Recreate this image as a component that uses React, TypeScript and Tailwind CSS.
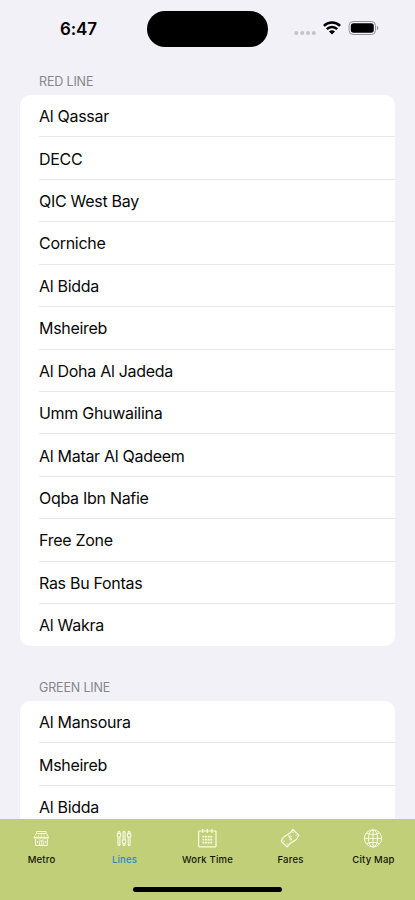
import React, { useState } from 'react';

interface Line {
  title: string;
  stations: string[];
}

const lines: Line[] = [
  {
    title: 'Red Line',
    stations: [
      'Al Qassar',
      'DECC',
      'QIC West Bay',
      'Corniche',
      'Al Bidda',
      'Msheireb',
      'Al Doha Al Jadeda',
      'Umm Ghuwailina',
      'Al Matar Al Qadeem',
      'Oqba Ibn Nafie',
      'Free Zone',
      'Ras Bu Fontas',
      'Al Wakra',
    ],
  },
  {
    title: 'Green Line',
    stations: ['Al Mansoura', 'Msheireb', 'Al Bidda'],
  },
];

const StoreIcon = () => (
  <svg width="20" height="20" viewBox="0 0 20 20" fill="none" stroke="currentColor" strokeWidth="1" strokeLinejoin="round">
    <path d="M5.5 5.5v-2h9.6v2M5 5.5h10.6l1.9 4H3.1z" />
    <path d="M7.8 5.5l-.6 4M10.3 5.5v4M12.8 5.5l.6 4" strokeWidth="0.6" />
    <path d="M3.1 9.5c.3 2 3.3 2 3.6 0 .3 2 3.3 2 3.6 0 .3 2 3.3 2 3.6 0 .3 2 3.3 2 3.6 0" strokeWidth="0.8" />
    <path d="M4.5 11.4v6h11.8v-6" />
    <path d="M8.5 17.4v-4.6h3.8v4.6M10.4 12.8v4.6" strokeWidth="0.8" />
    <path d="M6.5 12.9v2.2M14.3 12.9v2.2" />
  </svg>
);

const SlidersIcon = () => (
  <svg width="20" height="20" viewBox="0 0 20 20" fill="none" stroke="currentColor" strokeWidth="1.1">
    <rect x="4" y="3.2" width="1.9" height="14.2" rx="0.95" />
    <rect x="9.1" y="3.2" width="1.9" height="14.2" rx="0.95" />
    <rect x="14.2" y="3.2" width="1.9" height="14.2" rx="0.95" />
    <g className="fill-[#c1cf78]">
      <circle cx="4.95" cy="7.3" r="1.9" />
      <circle cx="10.05" cy="13.6" r="1.9" />
      <circle cx="15.15" cy="7.3" r="1.9" />
    </g>
  </svg>
);

const CalendarIcon = () => (
  <svg width="20" height="20" viewBox="0 0 20 20" fill="none" stroke="currentColor" strokeWidth="1.2">
    <rect x="1.6" y="3" width="17.4" height="15.8" rx="0.8" />
    <path d="M5.7 1v4M10.3 1v4M14.9 1v4" />
    <path d="M5.4 8.7h9.8M5.4 11.7h9.8M5.4 14.7h9.8" strokeWidth="1.8" strokeDasharray="1.9 0.73" />
  </svg>
);

const CashIcon = () => (
  <svg width="20" height="20" viewBox="0 0 20 20" fill="none" stroke="currentColor" strokeWidth="1.2" strokeLinecap="round" strokeLinejoin="round">
    <path d="M1.2 13.3C2.4 9.8 4 8.2 6.4 7.2C9.2 6 11.4 4.6 12.9 1.5L18.8 7.1C17.6 10.7 15.8 12.3 13.4 13.4C10.6 14.6 8.7 15.9 7.1 19z" />
    <path d="M11.4 8.4c-.8-.9-2.7-.5-2.5.6.3 1.1 2.4.6 2.7 1.7.3 1.1-1.6 1.8-2.6.8M8.6 7.7l3.4 4.4" strokeWidth="0.9" />
    <path d="M12.9 4.2l.1.1M16.1 7.3l.1.1M3.9 12.9l.1.1M7.1 16l.1.1" />
  </svg>
);

const GlobeIcon = () => (
  <svg width="20" height="20" viewBox="0 0 20 20" fill="none" stroke="currentColor" strokeWidth="1">
    <circle cx="10" cy="10.4" r="8.6" />
    <ellipse cx="10" cy="10.4" rx="4.6" ry="8.6" />
    <path d="M10 1.8V19M1.4 10.4h17.2M3.5 5.2c3.8 1.7 9.2 1.7 13 0M3.5 15.6c3.8-1.7 9.2-1.7 13 0" />
  </svg>
);

const tabs = [
  { label: 'Metro', Icon: StoreIcon },
  { label: 'Lines', Icon: SlidersIcon },
  { label: 'Work Time', Icon: CalendarIcon },
  { label: 'Fares', Icon: CashIcon },
  { label: 'City Map', Icon: GlobeIcon },
];

const StatusBar = () => (
  <header className="flex-none h-[57px] flex items-start">
    <div className="w-[147px] pt-[17px] pl-[10px] text-center text-[17px] leading-6 tracking-[-0.15px] font-semibold text-black">6:47</div>
    <div className="mt-[11px] w-[121px] h-9 rounded-full bg-black" />
    <div className="flex items-center mt-5 ml-[26px] h-4">
      <svg width="22" height="16" viewBox="0 0 22 16" className="fill-[#c3c3c8]">
        <circle cx="2.3" cy="12.9" r="2" />
        <circle cx="8.2" cy="12.9" r="2" />
        <circle cx="14" cy="12.9" r="2" />
        <circle cx="19.8" cy="12.9" r="2" />
      </svg>
      <svg width="20" height="16" viewBox="0 0 20 16" className="ml-[7px]" fill="none" stroke="black" strokeWidth="2.5">
        <path d="M.9 5.9c4.6-4.4 11.6-4.4 16.2 0M3.8 9.1c2.9-2.9 7.5-2.9 10.4 0" />
        <path d="M6 11.4c1.7-1.5 4.3-1.5 6 0l-3 3.1z" fill="black" stroke="none" />
      </svg>
      <svg width="32" height="16" viewBox="0 0 32 16" className="ml-[5px]">
        <rect x="1.1" y="1.5" width="26.4" height="13" rx="4" fill="none" stroke="#929297" />
        <rect x="2.8" y="3.2" width="23" height="9.6" rx="2.7" fill="black" />
        <path d="M28.9 5.8c1.9.7 1.9 3.7 0 4.4z" fill="#929297" />
      </svg>
    </div>
  </header>
);

const LineSection: React.FC<{ line: Line }> = ({ line }) => (
  <section className="px-5">
    <h2 className="h-[38px] pt-4 pl-[19px] text-[12.5px] leading-[18px] tracking-[-0.15px] uppercase text-[#86868b]">
      {line.title}
    </h2>
    <ul className="rounded-[10px] bg-white overflow-hidden">
      {line.stations.map((station) => (
        <li key={station} className="group h-[42.43px] pl-[19px]">
          <div className="h-full flex items-center pt-px border-b border-[#e7e7e9] group-last:border-transparent text-base tracking-[-0.29px] text-[#080808]">
            {station}
          </div>
        </li>
      ))}
    </ul>
  </section>
);

const App: React.FC = () => {
  const [activeTab, setActiveTab] = useState('Lines');

  return (
    <div className="flex flex-col w-[415px] h-[900px] overflow-hidden bg-[#f2f1f8] font-['Inter','Liberation_Sans',sans-serif]">
      <StatusBar />

      <main className="flex-1 min-h-0 overflow-hidden flex flex-col gap-[16.5px]">
        {lines.map((line) => (
          <LineSection key={line.title} line={line} />
        ))}
      </main>

      {/* Tab bar */}
      <nav className="flex-none h-[81px] flex flex-col items-center bg-[#c1cf78]">
        <div className="grid grid-cols-5 w-full h-[68px]">
          {tabs.map(({ label, Icon }) => (
            <button key={label} onClick={() => setActiveTab(label)} className="flex flex-col items-center pt-[9px] text-[#f9fbe8]">
              <span className="mr-px">
                <Icon />
              </span>
              <span
                className={`mt-[6px] text-[9.5px] leading-3 font-medium tracking-[0.2px] ${
                  activeTab === label ? 'text-[#2b87c8]' : 'text-[#14160c]'
                }`}
              >
                {label}
              </span>
            </button>
          ))}
        </div>
        <div className="w-[149px] h-[5px] rounded-full bg-black" />
      </nav>
    </div>
  );
};

export default App;
